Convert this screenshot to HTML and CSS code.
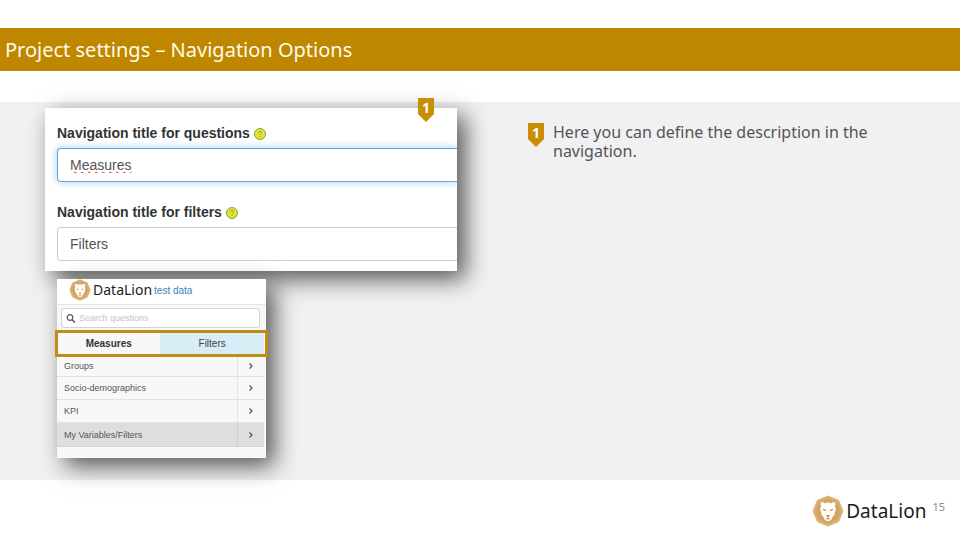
FILE: index.html
```html
<!DOCTYPE html>
<html lang="en">
<head>
<meta charset="utf-8">
<meta name="viewport" content="width=device-width, initial-scale=1">
<title>Project settings – Navigation Options</title>
<link rel="stylesheet" href="styles.css">
</head>
<body>
<svg class="defs" aria-hidden="true">
  <defs>
    <radialGradient id="tan" cx="50%" cy="50%" r="55%">
      <stop offset="0" stop-color="#c48a3c"/>
      <stop offset="0.6" stop-color="#d3a462"/>
      <stop offset="1" stop-color="#e3bd88"/>
    </radialGradient>
    <symbol id="lion" viewBox="0 0 32 32">
      <path fill="url(#tan)" d="M16 0.5 27 5 31.5 16 27 27 16 31.5 5 27 0.5 16 5 5Z"/>
      <path fill="#fffdf8" d="M8.500 8.500 10 7 12 7.500 13 8.500 14.500 7.500H17.500L19 8.500 20 7.500 22 7 23.500 8.500 23 11 24 14 23 17 22.500 20 20.500 22 19.500 24.500 17.500 26H14.500L12.500 24.500 11.500 22 9.500 20 9 17 8 14 9 11Z"/>
      <path fill="#b08a56" d="M11 13.800 14 15 13.700 16 11.500 15.400ZM21 13.800 18 15 18.300 16 20.500 15.400ZM14 20H18L16.500 21.800V23.300L18.500 24 16 24.500 13.500 24 15.500 23.300V21.800Z"/>
      <path fill="none" stroke="#ecdcc2" stroke-width="0.5" d="M14.300 16.500 14 20M17.700 16.500 18 20"/>
    </symbol>
    <symbol id="help" viewBox="0 0 12 12">
      <circle cx="6" cy="6" r="5.500" fill="#e3e23c" stroke="#6fae35" stroke-width="1"/>
      <path fill="none" stroke="#a09a30" stroke-width="1" d="M4.500 4.600C4.600 2.900 7.500 2.900 7.500 4.600 7.500 5.700 6 5.700 6 7M6 8V9"/>
    </symbol>
    <symbol id="chevron" viewBox="0 0 6 8">
      <path fill="none" stroke="#555" stroke-width="1.200" d="M1.500 1.500 4 4 1.500 6.500"/>
    </symbol>
  </defs>
</svg>

<header class="title-bar">
  <h1>Project settings – Navigation Options</h1>
</header>

<main class="stage">
  <div class="shots">
    <span class="badge badge-pinned">1</span>
    <form class="card settings">
      <div class="field">
        <label for="questions">Navigation title for questions <svg class="help"><use href="#help"/></svg></label>
        <input class="focused" id="questions" type="text" value="Measures">
      </div>
      <div class="field">
        <label for="filters">Navigation title for filters <svg class="help"><use href="#help"/></svg></label>
        <input id="filters" type="text" value="Filters">
      </div>
    </form>

    <section class="card panel">
      <div class="panel-head">
        <svg class="lion-small"><use href="#lion"/></svg>
        <span class="brand-small">DataLion</span>
        <a href="#">test data</a>
      </div>
      <div class="search">
        <svg viewBox="0 0 10 10"><circle cx="4" cy="4.500" r="2.800" fill="none" stroke="#555" stroke-width="1.200"/><path d="M6 6.500 9 9.500" stroke="#555" stroke-width="1.500"/></svg>
        <input type="text" placeholder="Search questions" aria-label="Search questions">
      </div>
      <div class="tabs">
        <button type="button" class="active">Measures</button>
        <button type="button">Filters</button>
      </div>
      <ul class="groups">
        <li><a href="#">Groups</a><svg><use href="#chevron"/></svg></li>
        <li><a href="#">Socio-demographics</a><svg><use href="#chevron"/></svg></li>
        <li><a href="#">KPI</a><svg><use href="#chevron"/></svg></li>
        <li class="selected"><a href="#">My Variables/Filters</a><svg><use href="#chevron"/></svg></li>
      </ul>
    </section>
  </div>

  <div class="note">
    <span class="badge">1</span>
    <p>Here you can define the description in the navigation.</p>
  </div>
</main>

<footer class="foot">
  <svg class="lion"><use href="#lion"/></svg>
  <span class="brand">DataLion</span>
  <span class="page">15</span>
</footer>
</body>
</html>
```
FILE: styles.css
```css
* { box-sizing: border-box; }

body {
  margin: 0;
  padding-top: 28px;
  background: #fff;
  color: #555;
  font-family: "Noto Sans", "Open Sans", sans-serif;
}

.defs { position: absolute; width: 0; height: 0; }

.title-bar {
  padding: 8px 5px;
  background: #bf8600;
}

.title-bar h1 {
  margin: 0;
  color: #fffbe8;
  font-size: 20px;
  font-weight: 400;
  line-height: 27px;
}

.stage {
  display: grid;
  grid-template-columns: 412fr 352fr;
  column-gap: 71px;
  margin-top: 31px;
  padding: 6px 80px 22px 45px;
  background: #f1f1f1;
}

.shots { position: relative; }

.card {
  background: #fff;
  box-shadow: 8px 8px 22px rgba(0, 0, 0, 0.65);
  font-family: "Liberation Sans", Arial, sans-serif;
}

.settings {
  display: grid;
  gap: 20px;
  padding: 15px 0 10px 12px;
  overflow: hidden;
}

.field {
  display: grid;
  gap: 5px;
}

.field label {
  color: #333;
  font-size: 14px;
  font-weight: 700;
  line-height: 20px;
}

.help {
  width: 12px;
  height: 12px;
  vertical-align: -2px;
}

.field input {
  width: 100%;
  height: 34px;
  padding: 0 12px;
  border: 1px solid #ccc;
  border-right: 0;
  border-radius: 4px 0 0 4px;
  outline: 0;
  background: #fff;
  color: #555;
  font: 14px "Liberation Sans", Arial, sans-serif;
}

.field .focused {
  border-color: #66a3d8;
  box-shadow: 0 0 8px rgba(102, 175, 233, 0.6);
  text-decoration: underline wavy #d33 1px;
  text-decoration-skip-ink: none;
}

.badge {
  flex: none;
  width: 16px;
  height: 24px;
  background: #c98e06;
  clip-path: polygon(0 0, 100% 0, 100% 67%, 50% 100%, 0 67%);
  color: #fff;
  font-size: 14px;
  font-weight: 700;
  line-height: 20px;
  text-align: center;
}

.badge-pinned {
  position: absolute;
  top: -10px;
  right: 23px;
  z-index: 1;
}

.panel {
  width: 50.7%;
  margin: 8px 0 0 12px;
  padding-bottom: 11px;
  background: #f8f8f8;
  font-size: 10px;
}

.panel-head {
  display: flex;
  align-items: center;
  height: 26px;
  padding: 0 12px 4px;
  border-bottom: 1px solid #e7e7e7;
  background: #fff;
}

.lion-small { width: 22px; height: 22px; }

.brand-small {
  margin: 0 2px;
  color: #222;
  font-family: "Noto Sans", "Open Sans", sans-serif;
  font-size: 14px;
}

.panel-head a {
  padding-top: 2px;
  color: #3a7fc0;
  text-decoration: none;
}

.search {
  display: flex;
  align-items: center;
  gap: 3px;
  height: 20px;
  margin: 3px 6px 4px 4px;
  padding: 0 4px;
  border: 1px solid #d2d2d2;
  border-radius: 3px;
  background: #fff;
}

.search svg { flex: none; width: 10px; height: 10px; }

.search input {
  width: 100%;
  min-width: 0;
  padding: 0;
  border: 0;
  outline: 0;
  background: none;
  font: 9px "Liberation Sans", Arial, sans-serif;
}

.search input::placeholder { color: #c4c4c4; }

.tabs {
  display: grid;
  grid-template-columns: 1fr 1fr;
  padding-right: 2px;
  outline: 3px solid #c18c14;
  outline-offset: -1px;
}

.tabs button {
  height: 23px;
  padding: 0;
  border: 0;
  background: #d9edf7;
  color: #444;
  font: 10px "Liberation Sans", Arial, sans-serif;
}

.tabs .active {
  background: #f8f8f8;
  color: #333;
  font-weight: 700;
}

.groups {
  margin: 0 2px 0 0;
  padding: 0;
  list-style: none;
}

.groups li {
  display: grid;
  grid-template-columns: 1fr 26px;
  align-items: center;
  height: 23px;
  border-bottom: 1px solid #e3e3e3;
}

.groups li:first-child { height: 22px; }

.groups a {
  padding-left: 7px;
  border-right: 1px solid #e3e3e3;
  color: #555;
  font-size: 9px;
  line-height: 22px;
  text-decoration: none;
}

.groups svg {
  justify-self: center;
  width: 6px;
  height: 8px;
}

.groups .selected {
  height: 24px;
  background: #dedede;
  border-color: #d2d2d2;
}

.groups .selected a { border-color: #d0d0d0; }

.note {
  display: flex;
  align-items: flex-start;
  gap: 9px;
  padding-top: 15px;
}

.note p {
  margin: 0;
  font-size: 16px;
  line-height: 19px;
}

.foot {
  display: flex;
  align-items: center;
  justify-content: flex-end;
  padding: 15px 15px 12px;
}

.lion { width: 32px; height: 32px; }

.brand {
  margin: 0 6px 0 2px;
  color: #1c1c1c;
  font-size: 19px;
  line-height: 32px;
}

.page {
  margin-bottom: 8px;
  color: #8c8c8c;
  font-size: 11px;
  line-height: 16px;
}
```
